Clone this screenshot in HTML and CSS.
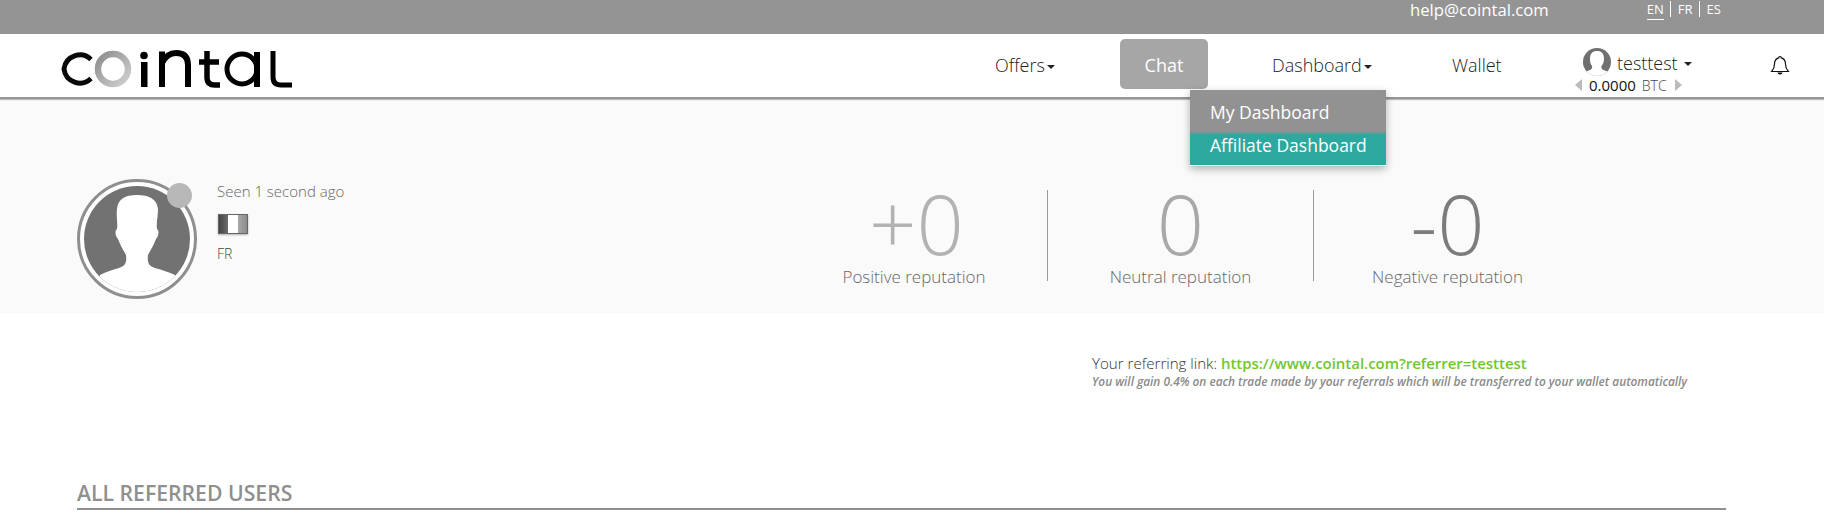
FILE: index.html
```html
<!DOCTYPE html>
<html lang="en">
<head>
<meta charset="utf-8">
<title>Cointal</title>
<link rel="stylesheet" href="styles.css">
</head>
<body>
<div class="topbar">
  <span class="help">help@cointal.com</span>
  <div class="langs"><span class="lang active">EN</span><span class="lang">FR</span><span class="lang">ES</span></div>
</div>
<header class="nav">
  <svg class="logo" width="232" height="38" viewBox="0 0 232 38" aria-label="cointal">
    <defs><linearGradient id="og" x1="0" y1="0" x2="1" y2="1"><stop offset="0" stop-color="#8d8d8d"/><stop offset="1" stop-color="#d0d0d0"/></linearGradient></defs>
    <path d="M30 9.500A16 16 0 0 0 3 19a16 16 0 0 0 27 9.500" fill="none" stroke="#0a0a0a" stroke-width="5"/>
    <circle cx="52" cy="19" r="15" fill="none" stroke="url(#og)" stroke-width="6.500"/>
    <rect x="80" y="12" width="6.500" height="25" fill="#000"/><circle cx="83" cy="5.500" r="3.800" fill="#000"/>
    <path d="M101 37V1.500M101 13q5-10 14-10 12 0 12 12V37" fill="none" stroke="#000" stroke-width="6"/>
    <path d="M146 1V28q0 7 8 7h5M138 12h20" fill="none" stroke="#000" stroke-width="5.500"/>
    <circle cx="181" cy="19" r="15" fill="none" stroke="#000" stroke-width="5"/><rect x="193" y="2" width="6" height="35" fill="#000"/>
    <path d="M212 1V27q0 8 8 8h11" fill="none" stroke="#000" stroke-width="5"/>
  </svg>
  <nav class="menu">
    <span class="item offers">Offers<i class="caret"></i></span>
    <span class="item chat">Chat</span>
    <span class="item dash">Dashboard<i class="caret"></i></span>
    <span class="item wallet">Wallet</span>
    <div class="user">
      <div class="user-top">
        <svg class="mini" width="28" height="28" viewBox="0 0 28 28"><defs><clipPath id="mc"><circle cx="14" cy="14" r="14"/></clipPath></defs><circle cx="14" cy="14" r="14" fill="#707070"/><path clip-path="url(#mc)" d="M14 3c4.500 0 7 2.500 7 8 0 3-1 5-2.500 7-.5 2 0 3 2 4l5 2v6H2v-6l5-2c2-1 2.500-2 2-4C7.500 16 7 14 7 11c0-5.500 2.500-8 7-8z" fill="#fff"/></svg>
        <span>testtest</span><i class="caret user-caret"></i>
      </div>
      <div class="balance"><i class="tri left"></i><b>0.0000</b><span>BTC</span><i class="tri right"></i></div>
    </div>
    <svg class="bell" width="20" height="22" viewBox="0 0 20 22"><path d="M10 2.500a1.200 1.200 0 0 1 1.200 1.300C14 4.500 15.500 7 15.500 10c0 4 1 5.500 2.800 7.500H1.700C3.500 15.500 4.500 14 4.500 10c0-3 1.500-5.500 4.300-6.200A1.200 1.200 0 0 1 10 2.500z" fill="none" stroke="#111" stroke-width="1.200"/><path d="M7.500 18.500a2.500 2 0 0 0 5 0z" fill="#111"/></svg>
  </nav>
</header>
<div class="dropdown">
  <div class="dd-item">My Dashboard</div>
  <div class="dd-item dd-active">Affiliate Dashboard</div>
</div>
<section class="profile">
  <div class="who">
    <div class="avatar">
      <svg width="120" height="120" viewBox="0 0 120 120"><defs><clipPath id="ac"><circle cx="60" cy="60" r="53"/></clipPath></defs><circle cx="60" cy="60" r="58.500" fill="#fff" stroke="#8f8f8f" stroke-width="3"/><circle cx="60" cy="60" r="53" fill="#727272"/><path clip-path="url(#ac)" d="M60 16C72 16 80 20 81 30C81 38 79 44 80 50C83 52 81 58 79 60C76 68 73 72 71 76C70 84 72 87 78 89C85 91 92 93 98 96L110 130H10L23 96C28 93 35 91 42 89C48 87 50 84 49 76C47 72 44 68 41 60C39 58 37 52 40 50C41 44 39 38 40 30C41 20 48 16 60 16z" fill="#fff"/></svg>
      <span class="status"></span>
    </div>
    <div class="meta">
      <div class="seen">Seen 1 second ago</div>
      <div class="flag"><i class="f1"></i><i class="f2"></i><i class="f3"></i></div>
      <div class="country">FR</div>
    </div>
  </div>
  <div class="reps">
    <div class="rep"><div class="num pos">+0</div><div class="lbl">Positive reputation</div></div>
    <div class="rep rep-mid"><div class="num neu">0</div><div class="lbl">Neutral reputation</div></div>
    <div class="rep"><div class="num neg">-0</div><div class="lbl">Negative reputation</div></div>
  </div>
</section>
<section class="referral">
  <div class="ref-box">
    <div class="ref-line">Your referring link: <a class="ref-link">https://www.cointal.com?referrer=testtest</a></div>
    <div class="ref-note">You will gain 0.4% on each trade made by your referrals which will be transferred to your wallet automatically</div>
  </div>
</section>
<section class="users">
  <h2 class="users-title">ALL REFERRED USERS</h2>
  <div class="users-empty">No referred users were found</div>
</section>
</body>
</html>
```
FILE: styles.css
```css
* { box-sizing: border-box; }
html, body { margin: 0; height: 515px; overflow: hidden; }
body { font-family: "Open Sans", "Noto Sans", sans-serif; font-weight: 300; background: #fff; color: #333; position: relative; }
.topbar { height: 34px; background: #949494; color: #fff; display: flex; padding-left: 1410px; font-size: 16.700px; font-weight: 400; }
.help { margin-top: -1px; line-height: 22px; }
.langs { display: flex; margin-left: 98px; padding-top: 1px; font-size: 13px; line-height: 16px; }
.lang { padding: 0 6px 0 7px; border-left: 1px solid #fff; height: 16px; }
.lang.active { border-left: 0; padding: 0; margin-right: 6px; border-bottom: 1px solid #fff; height: 19px; }
.nav { height: 65px; background: #fff; border-bottom: 2px solid #959595; box-shadow: 0 1px 1px rgba(0,0,0,.25); display: flex; align-items: flex-start; position: relative; z-index: 2; }
.logo { margin: 16px 0 0 61px; flex: none; }
.menu { position: absolute; left: 0; top: 0; right: 0; height: 62px; font-size: 18px; color: #222; }
.item { position: absolute; top: 5px; height: 50px; line-height: 52px; white-space: nowrap; }
.offers { left: 995px; }
.chat { left: 1120px; width: 88px; text-align: center; background: #a6a6a6; color: #fff; border-radius: 5px; font-weight: 400; }
.dash { left: 1272px; }
.wallet { left: 1452px; }
.caret { display: inline-block; width: 0; height: 0; border: 4px solid transparent; border-top-color: #222; border-bottom: 0; margin-left: 2px; vertical-align: middle; }
.user { position: absolute; left: 1583px; top: 14px; width: 118px; }
.user-top { display: flex; align-items: center; height: 28px; font-size: 18px; }
.user-top span { padding-top: 2px; }
.mini { margin-right: 6px; }
.user-caret { margin-left: 6px; margin-top: 3px; }
.balance { display: flex; align-items: center; font-size: 14px; height: 16px; margin-top: 1px; margin-left: -8px; gap: 6px; color: #444; }
.balance b { font-weight: 500; font-size: 15px; color: #111; margin-left: -1px; }
.tri { width: 0; height: 0; border: 6px solid transparent; margin: 0; }
.tri.left { border-right: 7px solid #bbb; border-left: 0; margin-right: 2px; }
.tri.right { border-left: 7px solid #bbb; border-right: 0; margin-left: 2px; }
.bell { position: absolute; left: 1770px; top: 20px; }
.dropdown { position: absolute; left: 1190px; top: 90px; width: 196px; background: #929292; color: #fff; box-shadow: 0 3px 8px rgba(0,0,0,.3); font-size: 17.500px; font-weight: 400; z-index: 5; border-bottom: 1px solid #fff; }
.dd-item { padding-left: 20px; white-space: nowrap; }
.dd-item:first-child { height: 41px; line-height: 44px; }
.dd-active { background: linear-gradient(#929292, #2ca89e 4px); height: 34px; line-height: 28px; }
.profile { height: 215px; background: #fafafa; display: flex; position: relative; }
.who { display: flex; width: 781px; flex: none; padding: 80px 0 0 77px; }
.avatar { position: relative; width: 120px; height: 120px; }
.status { position: absolute; left: 90px; top: 4px; width: 25px; height: 25px; border-radius: 50%; background: #b8b8b8; }
.meta { margin-left: 20px; font-size: 14px; color: #444; }
.seen { line-height: 20px; margin-top: 2px; font-size: 15px; color: #666; }
.flag { display: flex; width: 30px; height: 20px; margin: 13px 0 0 1px; border: 1px solid #666; box-shadow: 0 1px 2px rgba(0,0,0,.3); }
.flag i { flex: 1; }
.f1 { background: linear-gradient(90deg, #444, #6b6b6b); }
.f2 { background: #fff; }
.f3 { background: linear-gradient(90deg, #a8a8a8, #8a8a8a); }
.country { margin-top: 10px; line-height: 20px; font-size: 14px; }
.reps { display: flex; margin-top: 91px; height: 91px; }
.rep { width: 267px; text-align: center; border-right: 1px solid #999; }
.rep-mid { width: 266px; }
.rep:last-child { border-right: 0; }
.num { font-size: 83px; line-height: 65px; font-weight: 300; height: 65px; }
.pos { color: #b2b2b2; padding-left: 5px; }
.neu { color: #a8a8a8; }
.neg { color: #7c7c7c; }
.lbl { font-size: 17px; line-height: 24px; color: #666; margin-top: 10px; }
.referral { height: 165px; padding: 39px 0 0 1092px; }
.ref-line { font-size: 15.100px; line-height: 21px; color: #333; white-space: nowrap; }
.ref-link { color: #6ec82c; font-weight: 600; font-size: 14.950px; }
.ref-note { font-size: 11.850px; font-style: italic; font-weight: 600; color: #8a8a8a; line-height: 14px; white-space: nowrap; }
.users { padding: 0 98px 0 77px; }
.users-title { margin: 0; font-size: 21.200px; line-height: 27px; font-weight: 600; color: #8f8f8f; border-bottom: 2px solid #8f8f8f; height: 31px; }
.users-empty { text-align: center; padding-right: 42px; font-size: 14px; color: #555; line-height: 21px; }
```
